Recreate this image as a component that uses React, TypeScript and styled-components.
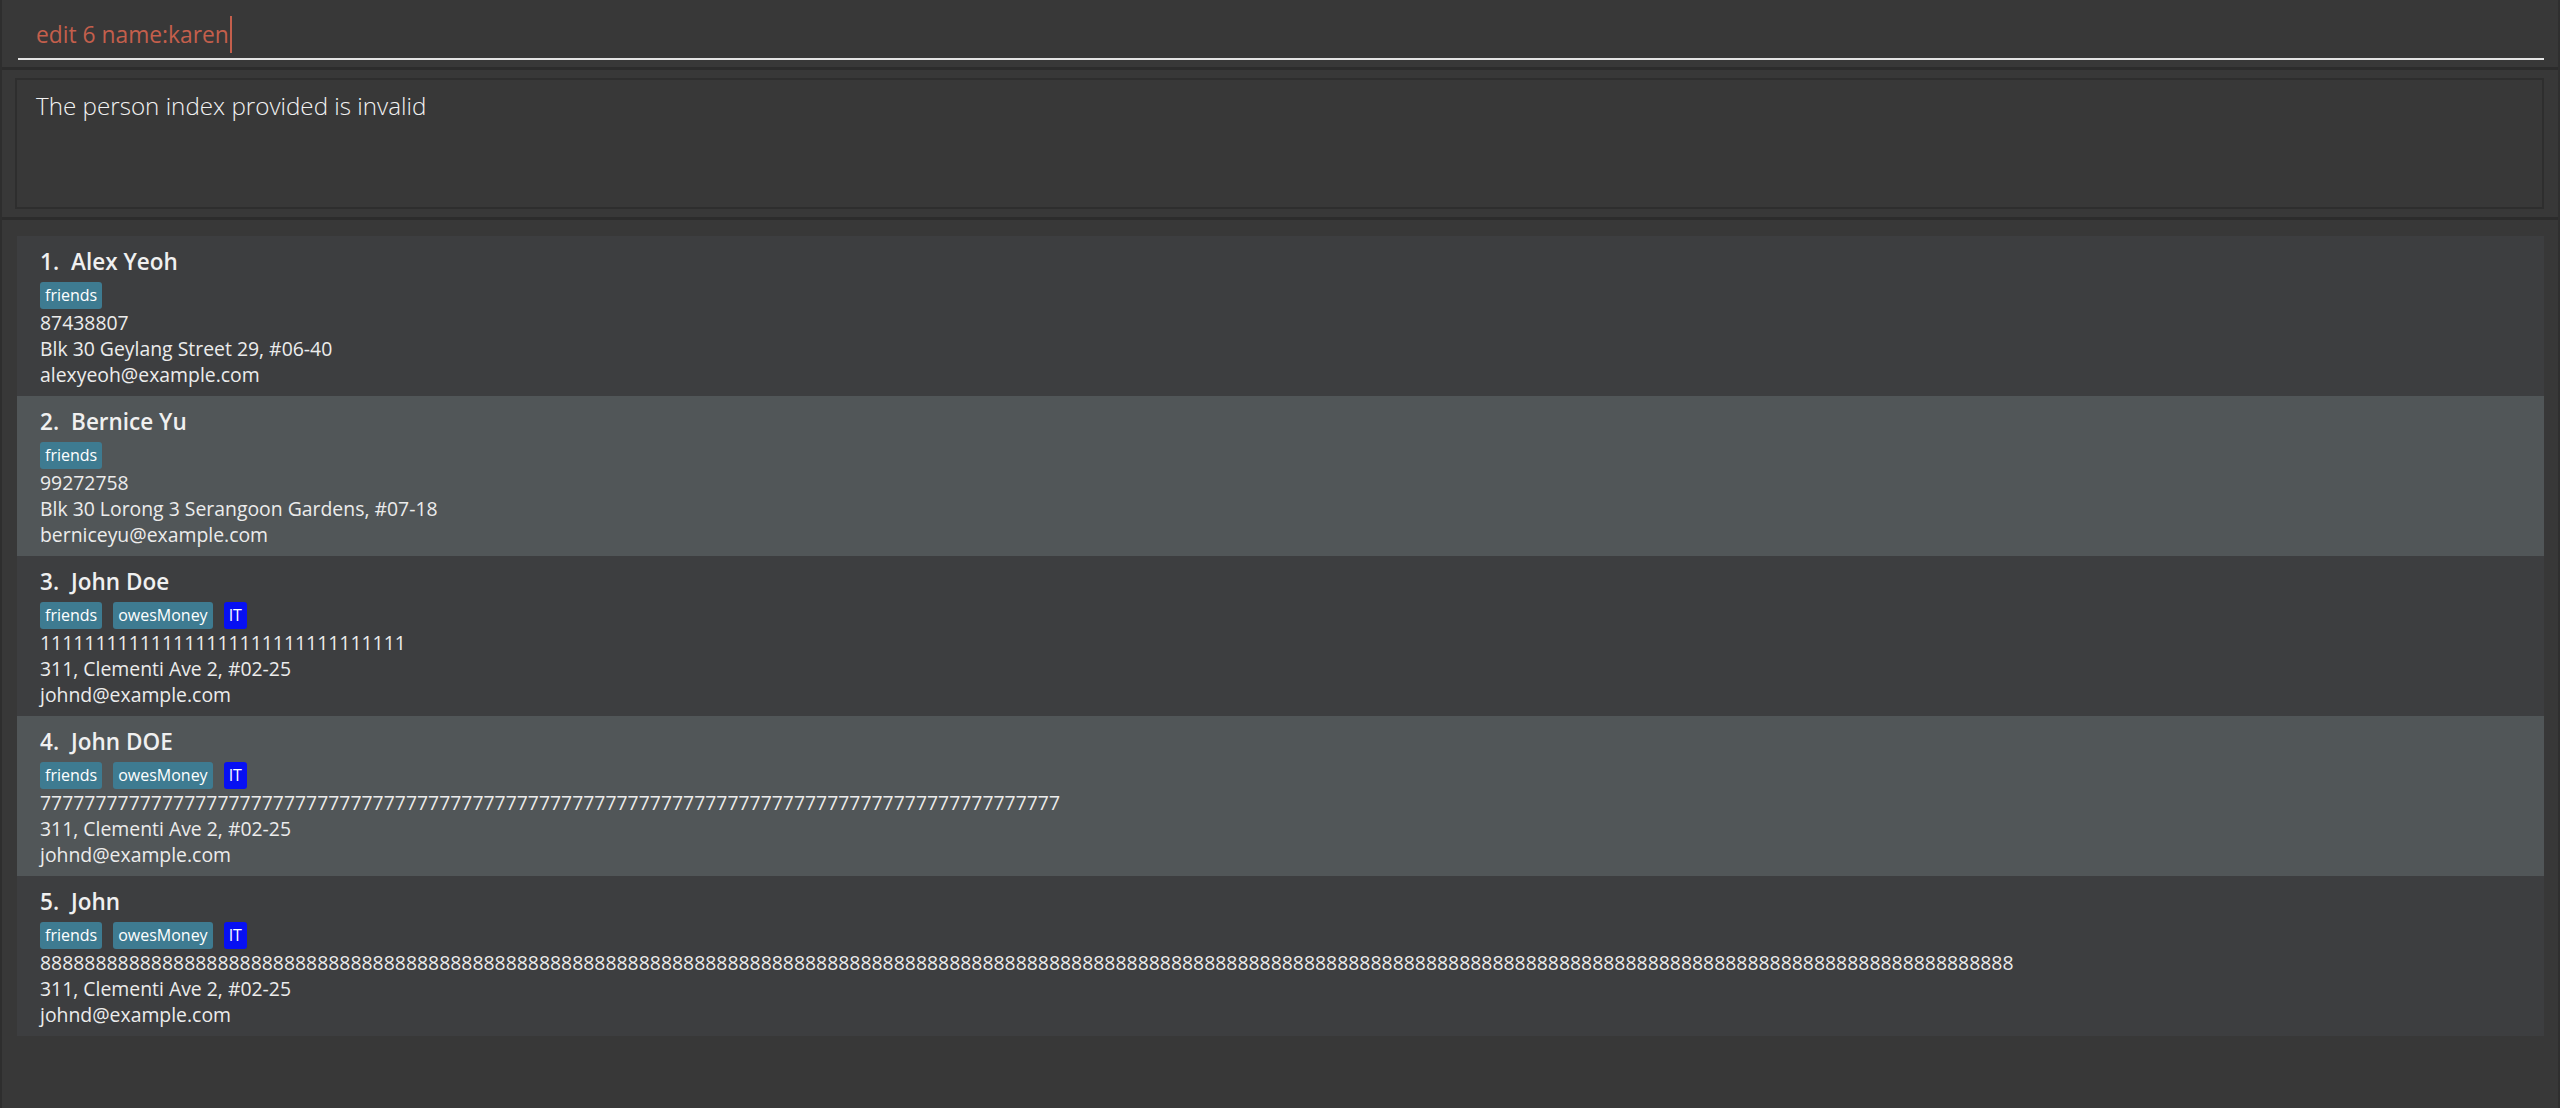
import React from 'react'
import styled, { createGlobalStyle } from 'styled-components'

const GlobalStyle = createGlobalStyle`
  html, body {
    margin: 0;
    padding: 0;
    background-color: #383838;
  }
  * {
    box-sizing: border-box;
  }
`

const Window = styled.div`
  height: 1108px;
  display: flex;
  flex-direction: column;
  background-color: #383838;
  border-left: 2px solid #2e2e2e;
  border-right: 2px solid #2f2f2f;
  font-family: 'Open Sans', 'Liberation Sans', sans-serif;
  overflow: hidden;
`

const CommandPane = styled.div`
  height: 67px;
  padding: 0 14px 0 16px;
  display: flex;
  align-items: flex-end;
  padding-bottom: 7px;
`

const CommandInput = styled.div`
  width: 100%;
  height: 50px;
  border-bottom: 2px solid #e4e4e4;
  display: flex;
  align-items: center;
  padding-left: 18px;
  font-size: 22.8px;
  color: #c45f4c;
`

const Caret = styled.span`
  display: inline-block;
  width: 2px;
  height: 37px;
  background-color: #c45f4c;
  margin-left: 1px;
`

const Divider = styled.div`
  height: 3px;
  background-color: #2c2c2c;
`

const ResultPane = styled.div`
  padding: 8px 14px 8px 13px;
`

const ResultBox = styled.div`
  height: 131px;
  border: 2px solid #2e2e2e;
  padding: 9px 19px;
  font-size: 24.2px;
  color: #f2f2f2;
  font-weight: 300;
`

const ListPane = styled.div`
  flex: 1;
  padding: 16px 14px 0 15px;
  display: flex;
  flex-direction: column;
`

const Card = styled.div<{ $alt: boolean }>`
  height: 160px;
  padding: 11px 23px 0;
  background-color: ${({ $alt }) => ($alt ? '#515658' : '#3d3e40')};
  color: #ececec;
`

const NameRow = styled.div`
  display: flex;
  gap: 12px;
  font-size: 22.5px;
  font-weight: 600;
  line-height: 30px;
  color: #f0f0f0;
`

const TagRow = styled.div`
  display: flex;
  gap: 11px;
  margin-top: 5px;
  margin-bottom: 1px;
`

const Tag = styled.span<{ $tone?: 'blue' }>`
  height: 27px;
  padding: 0 5px;
  border-radius: 3px;
  font-size: 16px;
  line-height: 27px;
  color: #ffffff;
  background-color: ${({ $tone }) => ($tone === 'blue' ? '#0710f2' : '#3e7b91')};
`

const Field = styled.div`
  font-size: 19.4px;
  line-height: 26px;
  white-space: nowrap;
`

type Person = {
  name: string
  tags: string[]
  phone: string
  address: string
  email: string
}

const people: Person[] = [
  {
    name: 'Alex Yeoh',
    tags: ['friends'],
    phone: '87438807',
    address: 'Blk 30 Geylang Street 29, #06-40',
    email: 'alexyeoh@example.com'
  },
  {
    name: 'Bernice Yu',
    tags: ['friends'],
    phone: '99272758',
    address: 'Blk 30 Lorong 3 Serangoon Gardens, #07-18',
    email: 'berniceyu@example.com'
  },
  {
    name: 'John Doe',
    tags: ['friends', 'owesMoney', 'IT'],
    phone: '1'.repeat(33),
    address: '311, Clementi Ave 2, #02-25',
    email: 'johnd@example.com'
  },
  {
    name: 'John DOE',
    tags: ['friends', 'owesMoney', 'IT'],
    phone: '7'.repeat(92),
    address: '311, Clementi Ave 2, #02-25',
    email: 'johnd@example.com'
  },
  {
    name: 'John',
    tags: ['friends', 'owesMoney', 'IT'],
    phone: '8'.repeat(178),
    address: '311, Clementi Ave 2, #02-25',
    email: 'johnd@example.com'
  }
]

export default function App() {
  return (
    <>
      <GlobalStyle />
      <Window>
        <CommandPane>
          <CommandInput>
            edit 6 name:karen
            <Caret />
          </CommandInput>
        </CommandPane>
        <Divider />
        <ResultPane>
          <ResultBox>The person index provided is invalid</ResultBox>
        </ResultPane>
        <Divider />
        <ListPane>
          {people.map((p, i) => (
            <Card key={i} $alt={i % 2 === 1}>
              <NameRow>
                <span>{i + 1}.</span>
                <span>{p.name}</span>
              </NameRow>
              <TagRow>
                {p.tags.map(tag => (
                  <Tag key={tag} $tone={tag === 'IT' ? 'blue' : undefined}>
                    {tag}
                  </Tag>
                ))}
              </TagRow>
              <Field>{p.phone}</Field>
              <Field>{p.address}</Field>
              <Field>{p.email}</Field>
            </Card>
          ))}
        </ListPane>
      </Window>
    </>
  )
}
